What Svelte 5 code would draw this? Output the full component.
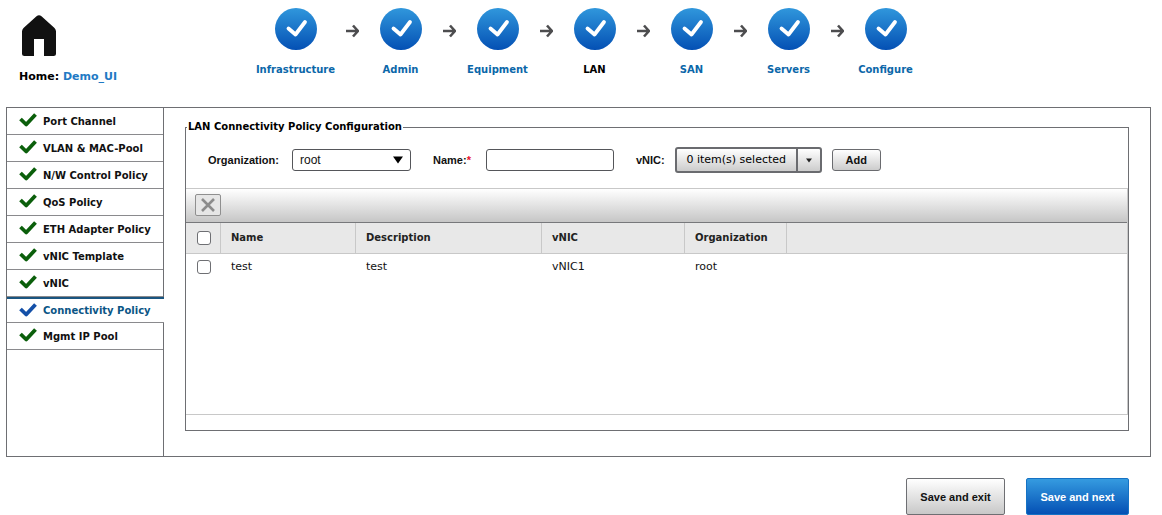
<script>
  const steps = ['Infrastructure', 'Admin', 'Equipment', 'LAN', 'SAN', 'Servers', 'Configure'];
  const currentStep = 'LAN';
  const tabs = [
    'Port Channel', 'VLAN & MAC-Pool', 'N/W Control Policy', 'QoS Policy',
    'ETH Adapter Policy', 'vNIC Template', 'vNIC', 'Connectivity Policy', 'Mgmt IP Pool'
  ];
  const rows = [{ name: 'test', description: 'test', vnic: 'vNIC1', organization: 'root' }];
  let activeTab = $state('Connectivity Policy');
  let policyName = $state('');
</script>

<header>
  <div class="home">
    <svg class="house" width="36" height="42" viewBox="0 0 36 42" aria-hidden="true">
      <path fill="#111" d="M15.5 1.2Q18 -.8 20.500 1.200L33.500 13Q35 14.500 35 16.500V38.500Q35 41 32.500 41H23V24H13V41H3.500Q1 41 1 38.500V16.500Q1 14.500 2.500 13Z" />
    </svg>
    <div class="crumb">Home: <a href="#home">Demo_UI</a></div>
  </div>
  <nav class="steps">
    {#each steps as step, i}
      {#if i > 0}
        <svg class="arrow" width="14" height="14" viewBox="0 0 14 14" aria-hidden="true">
          <path d="M1 7H12M8 1.500L13 7L8 12.500" fill="none" stroke="#4d4d4f" stroke-width="2.600" stroke-linejoin="round" />
        </svg>
      {/if}
      <a class="step" class:current={step === currentStep} href="#{step}">
        <span class="disc">
          <svg width="42" height="42" viewBox="0 0 42 42" aria-hidden="true">
            <path d="M13.500 20.500L20.500 26.500L30 14" fill="none" stroke="#fff" stroke-width="3.800" stroke-linecap="round" stroke-linejoin="round" />
          </svg>
        </span>
        {step}
      </a>
    {/each}
  </nav>
</header>

<main>
  <nav class="tabs">
    {#each tabs as tab}
      <button type="button" class="tab" class:active={tab === activeTab} onclick={() => (activeTab = tab)}>
        <svg width="18" height="14" viewBox="0 0 18 14" aria-hidden="true">
          <path d="M1.500 6L7.200 11.500L16.500 1.500" fill="none" stroke="currentColor" stroke-width="3.800" stroke-linejoin="round" />
        </svg>
        <span>{tab}</span>
      </button>
    {/each}
  </nav>

  <section class="content">
    <fieldset>
      <legend>LAN Connectivity Policy Configuration</legend>
      <div class="form">
        <div class="field org">
          <label for="org">Organization:</label>
          <span class="select">
            <select id="org"><option>root</option></select>
            <svg width="10" height="8" viewBox="0 0 10 8" aria-hidden="true"><path d="M0 0.500H10L5 7.500Z" /></svg>
          </span>
        </div>
        <div class="field name">
          <label for="name">Name:<b>*</b></label>
          <input id="name" type="text" bind:value={policyName} />
        </div>
        <div class="field vnic">
          <label for="vnic">vNIC:</label>
          <button id="vnic" type="button" class="multi">
            <span class="count">0 item(s) selected</span>
            <span class="caret"><svg width="6" height="5" viewBox="0 0 6 5" aria-hidden="true"><path d="M0 0.500H6L3 4.500Z" fill="#222" /></svg></span>
          </button>
        </div>
        <button type="button" class="add">Add</button>
      </div>

      <div class="grid">
        <div class="toolbar">
          <button type="button" aria-label="Delete">
            <svg width="14" height="14" viewBox="0 0 14 14" aria-hidden="true"><path d="M1 1L13 13M13 1L1 13" stroke="#8c8c8c" stroke-width="2.600" /></svg>
          </button>
        </div>
        <table>
          <colgroup>
            <col class="c-check" /><col class="c-name" /><col class="c-desc" /><col class="c-vnic" /><col class="c-org" /><col />
          </colgroup>
          <thead>
            <tr>
              <th class="check"><input type="checkbox" aria-label="Select all" /></th>
              <th>Name</th><th>Description</th><th>vNIC</th><th>Organization</th><th></th>
            </tr>
          </thead>
          <tbody>
            {#each rows as row}
              <tr>
                <td class="check"><input type="checkbox" aria-label="Select {row.name}" /></td>
                <td>{row.name}</td><td>{row.description}</td><td>{row.vnic}</td><td>{row.organization}</td><td></td>
              </tr>
            {/each}
          </tbody>
        </table>
      </div>
    </fieldset>
  </section>
</main>

<footer>
  <button type="button" class="exit">Save and exit</button>
  <button type="button" class="next">Save and next</button>
</footer>

<style>
  :global(body) {
    margin: 0;
    background: #fff;
    color: #111;
    font: 11px/14px Verdana, "DejaVu Sans", sans-serif;
  }
  :global(*) { box-sizing: border-box; }
  button, input, select { font: inherit; color: inherit; margin: 0; }
  svg { display: block; flex: none; }
  a { text-decoration: none; }

  header {
    display: grid;
    grid-template-columns: 1fr auto 1fr;
    padding: 8px 8px 0 19px;
    font-size: 10px;
    font-weight: bold;
  }
  .home { padding-top: 7px; }
  .house { margin-left: 2px; }
  .crumb { margin-top: 13px; color: #000; font-size: 11px; }
  .crumb a { color: #1f7ac4; }
  .steps { display: flex; gap: 8px; }
  .arrow { margin-top: 16px; }
  .step {
    display: flex;
    flex-direction: column;
    align-items: center;
    gap: 13px;
    min-width: 67px;
    color: #0b67a9;
  }
  .step:first-child { min-width: 83px; }
  .step.current { color: #000; }
  .disc {
    border-radius: 50%;
    background: linear-gradient(#3097dc, #0450b4);
  }

  main {
    display: flex;
    min-height: 350px;
    margin: 23px 11px 0 6px;
    border: 1px solid #6e6f73;
  }
  .tabs { flex: 0 0 157px; min-width: 0; border-right: 1px solid #6e6f73; }
  .tab {
    display: flex;
    align-items: center;
    gap: 6px;
    width: 100%;
    height: 27px;
    padding: 1px 0 0 12px;
    border: 0;
    border-bottom: 1px solid #8a8a8d;
    background: #fff;
    font-size: 10px;
    font-weight: bold;
    text-align: left;
    white-space: nowrap;
  }
  .tab svg { color: #0b5f0b; margin-bottom: 3px; }
  .tab.active {
    width: 157px;
    height: 26px;
    border-top: 2px solid #1a5580;
    color: #0a5585;
  }
  .tab.active svg { color: #1450a8; }

  .content { flex: 1; min-width: 0; padding: 12px 21px 25px; display: flex; }
  fieldset {
    flex: 1;
    min-width: 0;
    margin: 0;
    padding: 0 0 15px;
    border: 1px solid #6e6f73;
    display: flex;
    flex-direction: column;
  }
  legend { padding: 0 1px; margin-left: 1px; font-size: 10px; font-weight: bold; color: #000; }
  .form {
    display: flex;
    align-items: center;
    height: 54px;
    padding: 0 0 2px 22px;
    font: bold 11px/14px "Liberation Sans", Arial, sans-serif;
  }
  .field { display: flex; align-items: center; gap: 12px; margin-right: 22px; }
  .org label { min-width: 72px; }
  .name label { min-width: 41px; }
  .name b { color: #e8112d; }
  .field.vnic { gap: 10px; margin-right: 10px; }
  .select { display: flex; align-items: center; position: relative; }
  .select select {
    appearance: none;
    width: 119px;
    height: 22px;
    padding: 0 20px 0 7px;
    border: 1px solid #55565a;
    border-radius: 3px;
    background: #fff;
    font-size: 12px;
    font-weight: normal;
  }
  .select svg { position: absolute; right: 8px; pointer-events: none; }
  .name input {
    width: 128px;
    height: 22px;
    border: 1px solid #55565a;
    border-radius: 3px;
    padding: 0 6px;
    font-weight: normal;
  }
  .multi {
    display: flex;
    align-items: center;
    height: 26px;
    padding: 0;
    border: 2px solid #6a6b6f;
    border-radius: 3px;
    background: linear-gradient(#fff, #ccc);
    font: 11px/14px Verdana, "DejaVu Sans", sans-serif;
    color: #000;
  }
  .count { width: 119px; white-space: nowrap; text-align: center; }
  .caret { width: 24px; height: 22px; border-left: 2px solid #6a6b6f; display: flex; align-items: center; justify-content: center; }
  .add {
    width: 49px;
    height: 22px;
    padding: 0;
    border: 1px solid #6a6b6f;
    border-radius: 3px;
    background: linear-gradient(#fff, #ccc);
  }

  .grid { flex: 1; border: 1px solid #c8c8c8; border-left: 0; }
  .toolbar {
    height: 34px;
    padding: 5px 9px;
    border-bottom: 1px solid #77787b;
    background: linear-gradient(#fff, #c6c6c6);
  }
  .toolbar button {
    display: grid;
    place-items: center;
    width: 26px;
    height: 22px;
    padding: 0;
    border: 1px solid #8f8f8f;
    border-radius: 2px;
    background: #e6e6e6;
  }
  table { width: 100%; table-layout: fixed; border-collapse: separate; border-spacing: 0; }
  .c-check { width: 35px; }
  .c-name { width: 135px; }
  .c-desc { width: 186px; }
  .c-vnic { width: 143px; }
  .c-org { width: 102px; }
  th, td { padding: 0 0 0 10px; text-align: left; }
  th {
    height: 31px;
    border-right: 1px solid #c8c8c8;
    border-bottom: 1px solid #c8c8c8;
    background: #e8e8e8;
    color: #222;
    font-size: 10px;
  }
  th:last-child { border-right: 0; }
  td { height: 26px; color: #111; }
  input[type="checkbox"] {
    appearance: none;
    display: block;
    width: 14px;
    height: 14px;
    border: 1px solid #6e6f73;
    border-radius: 3px;
    background: #fff;
  }
  input[type="checkbox"]:checked { background: #0450b4; }
  .check { padding-left: 11px; }

  footer {
    display: flex;
    justify-content: flex-end;
    gap: 21px;
    padding: 21px 33px 0 0;
  }
  footer button {
    height: 37px;
    border: 1px solid #6e6f73;
    border-radius: 2px;
    padding: 0;
    background: linear-gradient(#fff, #c8c8c8);
    font: bold 11px/14px "Liberation Sans", Arial, sans-serif;
  }
  .exit { width: 99px; }
  footer .next {
    width: 103px;
    border-color: #1572c4;
    background: linear-gradient(#359be0, #0450b4);
    color: #fff;
  }
</style>
